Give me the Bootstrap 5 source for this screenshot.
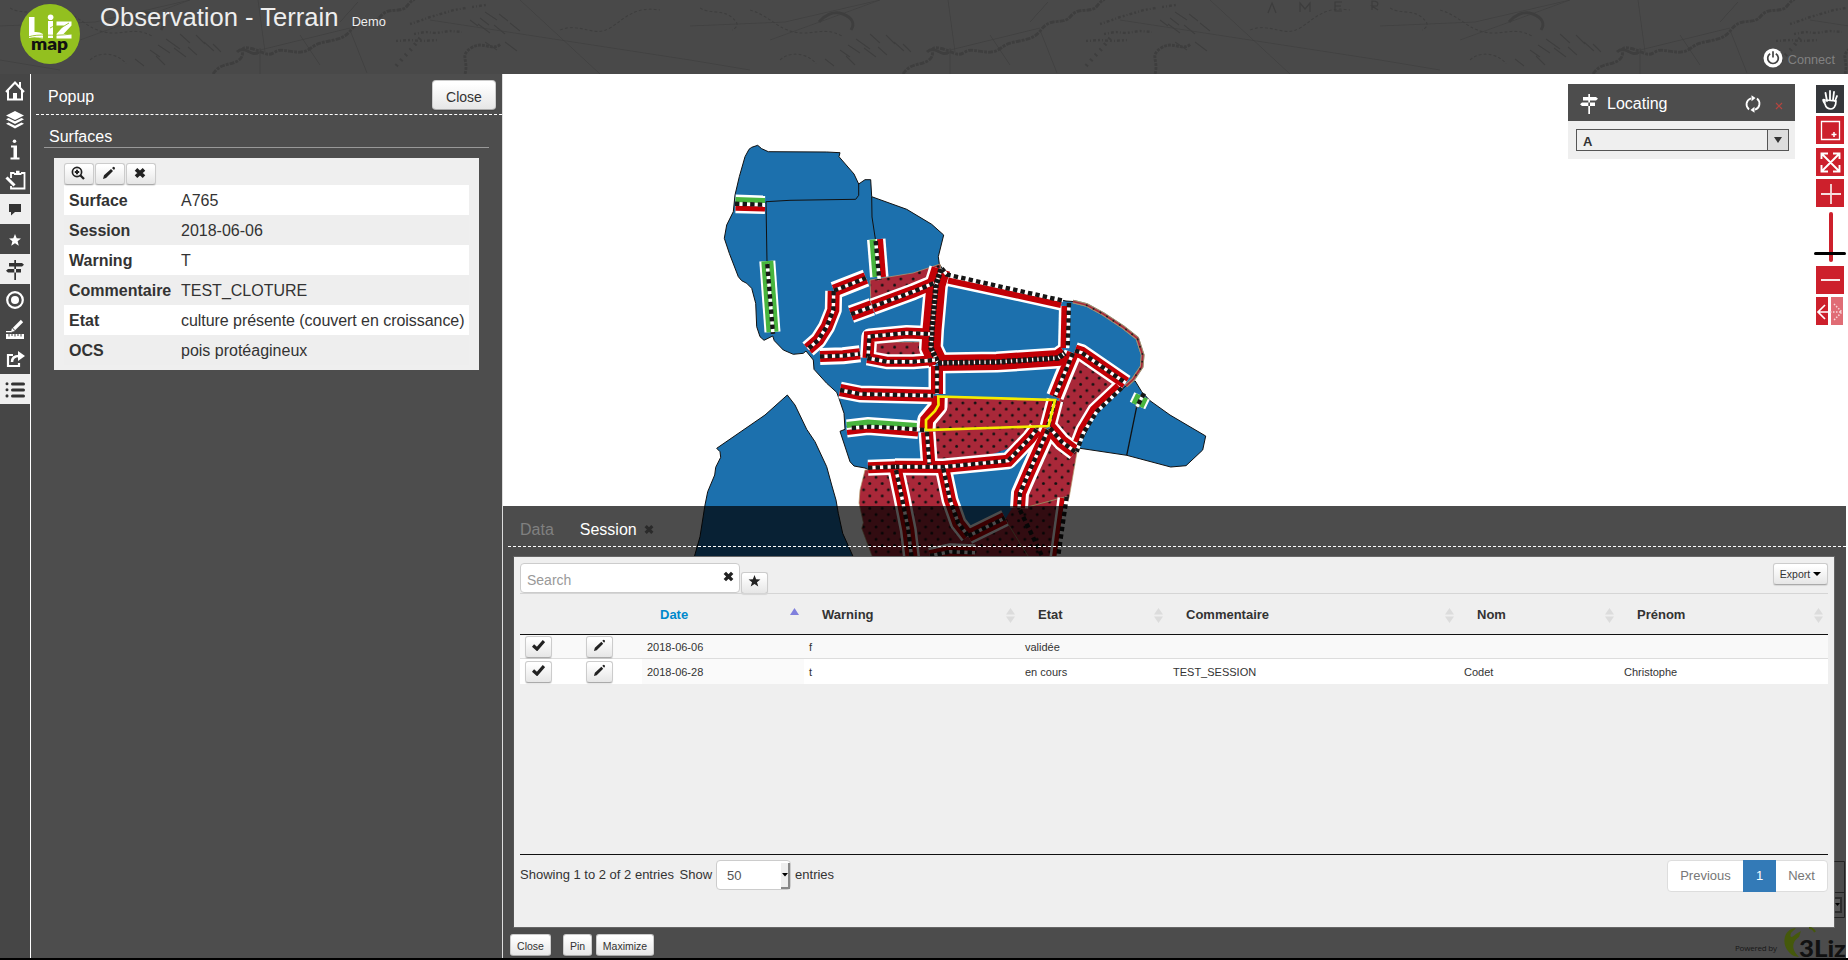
<!DOCTYPE html>
<html lang="en">
<head>
<meta charset="utf-8">
<title>Observation - Terrain</title>
<link href="https://cdn.jsdelivr.net/npm/bootstrap@5.3.0/dist/css/bootstrap.min.css" rel="stylesheet">
<style>
body{font-family:"Liberation Sans",Arial,sans-serif;font-size:14px;line-height:20px;color:#333;background:#000;height:960px;overflow:hidden}
svg{display:block;flex:none}
.top-bar{height:74px;background:#494949;color:#eee}
.top-bar .relief{position:absolute;inset:0}
.brand-mark{margin:4px 0 0 20px}
.app-title{font-size:25.6px;line-height:34px;margin-left:20px}
.app-title span{font-size:12.8px;margin-left:6px}
.connect{font-size:12.7px;color:#818181;margin:0 13px 5px 0;gap:5px}
.work-area{height:884px;background:#4d4d4d}
.side-menu{width:31px;background:#464646;border-right:1px solid #fff;color:#fff}
.side-menu div{height:30px;width:30px;padding-top:1px}
.side-menu .on{background:#efefef;color:#333}
.left-dock{width:472px;border-right:1px solid #ddd;color:#fff;font-size:16px}
.dock-title{height:41px;margin-left:5px;padding:6px 0 0 12px;border-bottom:1px dashed #fff}
.grp{height:33px;margin:0 13px 0 13px;padding:12px 0 0 5px;border-bottom:1px solid #999}
.glossy{background:linear-gradient(#fff,#fff 10%,#e6e6e6);border:1px solid #ccc;border-bottom-color:#aaa;border-radius:3px;color:#333;padding:0;box-shadow:0 1px 1px rgba(0,0,0,.1);font-size:10.5px;line-height:1;display:flex;align-items:center;justify-content:center}
.big-close{width:64px;height:30px;font-size:14px;border-radius:4px;margin:-4px 6px 0 0;padding-top:3px}
.feature{margin:10px 23px 0;background:#efefef;padding:5px 10px;height:212px;color:#333}
.feature .actions{gap:1px}
.feature .glossy{width:30px;height:22px;padding:0 3px 3px 0}
.feature table{width:405px;table-layout:fixed}
.feature td,.feature th{height:30px;padding:2px 0 0 5px;line-height:28px}
.feature th{width:112px}
.feature .long{letter-spacing:-.05px}
.feature tr:nth-child(odd){background:#fff}
.feature tr:nth-child(even){background:#eee}
.map-area{background:#fff;overflow:hidden}
.map-svg{width:1345px;height:884px}
.locate{position:absolute;left:1065px;top:10px;width:227px;height:75px;background:#efefef}
.locate-head{height:37px;background:#4d4d4d;color:#fff;font-size:16px;padding:2px 12px 0 12px}
.combo{height:22px;margin:8px 6px 0 8px;border:1px solid #555;font-weight:700;font-size:13px;padding-left:6px}
.combo i{width:21px;height:20px;background:#ddd;border-left:1px solid #555}
.nav-tools{position:absolute;left:1311px;top:11px;width:32px}
.bottom-dock{position:absolute;left:0;top:432px;width:1343px;height:452px;background:rgba(0,0,0,.7)}
.tab-row{height:41px;margin:0 0 0 5px;border-bottom:1px dashed #fff;padding:7px 0 0 12px;font-size:16px;color:#fff}
.data-panel{margin:9px 0 0 10px;height:372px;width:1322px;background:#efefef;border:1px solid #666;border-left-color:#555;padding:6px}
.searchbox{width:220px;height:30px;background:#fff;border:1px solid #ccc;border-radius:4px;color:#999;padding:6px 5px 0 6px}
.searchbox svg{margin-top:1px}
.grid-table{table-layout:fixed;width:1308px;font-size:11px;border-collapse:separate;border-spacing:0}
.grid-table th{height:42px;font-size:13px;padding:2px 5px 0 18px;border-top:1px solid #d5d5d5;border-bottom:1px solid #111}
.grid-table td{height:24px;padding:0 5px;border-bottom:1px solid #ddd;background:#f9f9f9}
.grid-table tr:last-child td{border:0;background:#fff;height:25px}
.grid-table tr:last-child td.sorted{background:#fafafa}
.grid-table .glossy{width:27px;height:22px;padding-bottom:3px}
.table-rest{height:171px;border-bottom:1px solid #111}
.pager{height:32px;border:1px solid #ddd;border-radius:4px;background:#fff;font-size:13px;color:#777;margin-top:5px}
.pager span{line-height:30px;text-align:center}
.len{width:75px;height:30px;border:1px solid #ccc;border-radius:4px;background:#fff;margin:5px 4px 0 4px;color:#555}
.foot{font-size:13px}
.foot>span{margin-top:10px}
</style>
</head>
<body>
<header class="top-bar position-relative d-flex justify-content-between overflow-hidden">
  <svg class="relief" width="1848" height="74">
    <defs>
      <pattern id="relief" width="690" height="74" patternUnits="userSpaceOnUse">
        <g fill="none" stroke="#3e3e3e" stroke-width="1.2">
          <path d="M0 26L95 22L190 0M80 40L190 0M265 52L258 0M260 50L350 28M0 60L60 70M350 30L367 73M520 0L600 74M430 20L690 60" stroke-width=".7"/>
          <path d="M150 50l10 7m-2-12l12 8m-4-14l14 10m0-15l10 9m6-8l9 9m8 0l8 8m-47-4l12 9m2-10l9 8m7-13l10 9m-58 5l9 9m-30-6l9 7M470 20l8 6m2-8l9 7m-4-13l12 8m2-6l9 7m-30 3l12 9m4-8l11 9m5-11l10 8m-35 11l12 8m8-8l12 9"/>
          <path d="M60 10c20 6 26 18 44 22s30-6 48 4M90 60c10-10 30-6 36 4M10 8c10 6 22 2 30 8s10 10 2 14M560 30c20-8 34 8 50-2s24-22 50-18" stroke-dasharray="3 2"/>
          <path d="M213 74c8-12 18-8 26-14s-2-14 10-12 18 10 26 4 24 6 36-4 30-4 40-18 22-4 30-14 20-2 26-10 6-4 8-8" stroke-width="3" stroke-dasharray="5 1 3 1"/>
          <path d="M237 52c8-8 14 6 22 0m-130-30c5-6 14-12 24-8s12 10 8 16" stroke-width="3"/>
          <path d="M465 74c4-14-6-18 6-26s20 4 30-4" stroke-width="3" stroke-dasharray="3 1"/>
          <path d="M260 48v26M300 35l20 30M340 22l18-20" stroke-width=".8"/>
          <path d="M410 24l12-4 8-3 14-4 10-3 12-2m6-1l14-2m-72 29l12-2 10 1 14-2 12 1m-66 9l14-1 12 1 16-1" stroke-width="2.500" stroke-dasharray="2 2 1 2 3 2"/>
          <path d="M396 66l8-9 9-10 8-10" stroke-width="4" stroke-dasharray="2 5"/>
        </g>
      </pattern>
    </defs>
    <rect width="1848" height="74" fill="url(#relief)"/>
    <path d="M1268 13l4-10 4 10M1300 12V3l5 6 5-6v9M1342 2h-7v9h7m-7-5h6M1372 10V1q8 0 5 5h-5l6 4" fill="none" stroke="#3d3d3d" stroke-width="1.200"/>
  </svg>
  <div class="position-relative d-flex align-items-start">
    <svg class="brand-mark" width="60" height="60" viewBox="0 0 60 60">
      <circle cx="30" cy="30" r="30" fill="#93c01f"/>
      <g fill="#fff"><path d="M9 13h5.500v15q5-.5 8.500 2v5q-7-3-14-1zM28 17h5v17h-5zM36.500 17.500h15v4l-8 8.500h8v4.500h-15v-4.500l7.500-8.500h-7.500z"/><circle cx="30.600" cy="13.300" r="2.800"/></g>
      <path d="M8 33c12-4 22 0 44-3M12 35.500c10-3 15 0 18-1M36 27l13-8M30 24l4-2" stroke="#93c01f" stroke-width=".9" fill="none"/>
      <text x="11" y="46" font-family="Lato,sans-serif" font-weight="800" font-size="17" textLength="37" lengthAdjust="spacingAndGlyphs" fill="#111">map</text>
    </svg>
    <div class="app-title">Observation - Terrain <span>Demo</span></div>
  </div>
  <div class="connect position-relative d-flex align-items-center align-self-end">
    <svg width="20" height="20" viewBox="0 0 20 20"><circle cx="10" cy="10" r="9.500" fill="#fff"/><path d="M7.200 5.700a5.300 5.300 0 1 0 5.600 0M10 3.200v6.300" fill="none" stroke="#444" stroke-width="1.700"/></svg><span class="pt-1" style="line-height:18px">Connect</span>
  </div>
</header>

<main class="work-area d-flex">
  <nav class="side-menu flex-shrink-0">
    <div class="d-flex align-items-center justify-content-center"><svg width="22" height="22" viewBox="0 0 22 22" fill="none" stroke="#fff" stroke-width="2"><path d="M2 13l9-9.500 9 9.500M4 11v9.500h14V11M16 8V3"/><path d="M9 20v-6h4v6z" fill="#fff" stroke="none"/></svg></div>
    <div class="d-flex align-items-center justify-content-center"><svg width="20" height="20" viewBox="0 0 20 20" fill="#fff"><path d="M10 1l9 4.500-9 4.500L1 5.500zM1 9.300l2.500-1.200 6.500 3.200 6.500-3.200L19 9.300l-9 4.700zM1 13.700l2.500-1.200 6.500 3.200 6.500-3.200 2.500 1.200-9 4.700z"/></svg></div>
    <div class="d-flex align-items-center justify-content-center"><svg width="10" height="21" viewBox="0 0 10 21" fill="#fff"><circle cx="4.500" cy="2.300" r="1.800"/><path d="M1 6.500h6v12h2.500v2H.5v-2H3.500v-10H1z"/></svg></div>
    <div class="d-flex align-items-center justify-content-center"><svg width="21" height="20" viewBox="0 0 21 20" fill="none" stroke="#fff" stroke-width="1.800"><path d="M6 8V3h3.500M16 3h3.500v15.500H6V16"/><path d="M9 5V3h2V.8h3.500V3h2v2z" fill="#fff" stroke="none"/><path d="M1.500 7.500l8 8" stroke-width="3"/></svg></div>
    <div class="on d-flex align-items-center justify-content-center"><svg width="14" height="13" viewBox="0 0 14 13" fill="#333"><path d="M1 1h12v8H7l-4 3.500V9H1z"/></svg></div>
    <div class="d-flex align-items-center justify-content-center"><svg width="14" height="14" viewBox="0 0 14 14" fill="#fff"><path d="M7 1l1.700 4.300 4.300.2-3.400 2.800 1.200 4.400L7 10.200l-3.800 2.500 1.200-4.400L1 5.500l4.300-.2z"/></svg></div>
    <div class="on d-flex align-items-center justify-content-center"><svg width="18" height="20" viewBox="0 0 18 20" fill="#333"><path d="M8.300 0h1.700v20H8.300zM3 3h13l2 1.700-2 1.700H3zM15 9H2L0 10.700l2 1.700h13z"/></svg></div>
    <div class="d-flex align-items-center justify-content-center"><svg width="20" height="20" viewBox="0 0 20 20"><circle cx="10" cy="10" r="7.800" fill="none" stroke="#fff" stroke-width="2.200"/><circle cx="10" cy="10" r="4" fill="#fff"/></svg></div>
    <div class="d-flex align-items-center justify-content-center"><svg width="20" height="21" viewBox="0 0 20 21"><path d="M9 10l8-8" stroke="#fff" stroke-width="3.200"/><path d="M6 13l1-4 3 3zM1 12h6v1.200H1zM1 15h18v5H1z" fill="#fff"/><path d="M4 15v2.500m3-2.500v2m3-2v2.500m3-2.500v2m3-2v2.500" stroke="#464646"/></svg></div>
    <div class="d-flex align-items-center justify-content-center"><svg width="19" height="17" viewBox="0 0 19 17" fill="none" stroke="#fff" stroke-width="2.200"><path d="M7 4H2v11h11v-3"/><path d="M6 11c0-5 3-6 7-6" stroke-width="2.500"/><path d="M12 0l7 5-7 5z" fill="#fff" stroke="none"/></svg></div>
    <div class="on d-flex align-items-center justify-content-center"><svg width="20" height="17" viewBox="0 0 20 17" stroke="#333" stroke-width="3" stroke-linecap="round"><path d="M7.500 3H18.500M7.500 9H18.500M7.500 15H18.500M2 2.700v.1M2 8.700v.1M2 14.800v.1"/></svg></div>
  </nav>

  <section class="left-dock flex-shrink-0">
    <div class="dock-title d-flex align-items-center justify-content-between">Popup<button class="glossy big-close">Close</button></div>
    <div class="grp">Surfaces</div>
    <div class="feature">
      <div class="actions d-flex">
        <button class="glossy"><svg width="14" height="14" viewBox="0 0 14 14" fill="none" stroke="#222"><circle cx="6" cy="6" r="4.600" stroke-width="1.700"/><path d="M9.300 9.300L13 13" stroke-width="2.300"/><path d="M6 3.800v4.400M3.800 6h4.400" stroke-width="2"/></svg></button>
        <button class="glossy"><svg width="14" height="14" viewBox="0 0 14 14" fill="#222"><path d="M1 13l1-3.700L9 3l2 2-7 7zM10 2l1.500-1.300q1.500 0 1.500 1.800L12 4z"/></svg></button>
        <button class="glossy"><svg width="12" height="12" viewBox="0 0 12 12" stroke="#222" stroke-width="3.700"><path d="M2 2.300l8 7.400M10 2.300L2 9.700"/></svg></button>
      </div>
      <table>
        <tr><th>Surface</th><td>A765</td></tr>
        <tr><th>Session</th><td>2018-06-06</td></tr>
        <tr><th>Warning</th><td>T</td></tr>
        <tr><th>Commentaire</th><td>TEST_CLOTURE</td></tr>
        <tr><th>Etat</th><td class="long text-nowrap">culture présente (couvert en croissance)</td></tr>
        <tr><th>OCS</th><td>pois protéagineux</td></tr>
      </table>
    </div>
  </section>

  <section class="map-area position-relative flex-grow-1">
    <svg class="map-svg" viewBox="503 74 1345 884">
      <defs>
        <pattern id="dots" width="12.400" height="12.400" patternUnits="userSpaceOnUse" patternTransform="translate(936 401)"><rect width="13" height="13" fill="#a92839"/><circle cx="2" cy="2" r="1.450" fill="#111"/><circle cx="8.200" cy="8.200" r="1.450" fill="#111"/></pattern>
      </defs>
      <g fill="#1c70ad" stroke="#111" stroke-width="1">
        <path d="M735 195L739.300 176.700 745 156.700 749 149.300 751.700 147.300 757.700 145.300 761.700 148.700 768.300 151.700 826.700 152 840 152.700 839 156.700 854 174 858.700 184 865 179.700 870.700 179.700 871.700 196.700 906.700 209.300 931.700 224.300 943.700 235 938.300 256.700 939.300 264 946 274 1066 301 1073 301.500 1086.700 305 1103.300 314 1123.300 327.300 1137.300 338.300 1142.700 355 1141.700 366.700 1133.300 379.300 1126 386 1096 413 1077 452 1010 530 930 500 865 468 854 466 850 461.700 840 431.300 845 429.300 844 413.300 839.300 399.300 836.700 392.300 826.700 383.300 814 369.300 813.300 360 806 351 803.300 353.300 793.300 354.300 783.300 350 774.300 340.700 772.700 336 764 340.300 760 336.700 756.700 326.700 755.700 303.300 751.700 288.300 746.700 283.300 741.700 280.700 738.300 276.700 729.300 253.300 724.300 238.300 726.700 225 733.300 211.700z"/>
        <path fill="none" d="M858.700 184V195.300L855.700 199.300 790 200.300 766 201.700 767 262M871.700 196.700L872 217 875.500 240"/>
        <path d="M716.700 448.300L765 415 787.300 395 795 405 806.700 429.300 815 441.700 826.700 466.700 831.700 485 836 500 838.300 513.300 842.700 533.300 860 572H690L700 536.700 705 505 707.700 491.700 714.700 475 715.700 467.300 720.700 457.300 720 451.700z"/>
        <path d="M1135 380.700L1141.700 391.700 1150 400.700 1170 415 1205.700 436 1202.700 450 1186 465.700 1170.700 467 1126.700 455.300 1078 448 1096 413 1128 384z"/>
        <path d="M1136.700 406.700L1126.700 455.300" stroke-width="1.300"/>
      </g>
      <g fill="none"><path id="rim" d="M1073 301.500L1086.700 305 1103.300 314 1123.300 327.300 1137.300 338.300 1142.700 355 1141.700 366.700 1133.300 379.300 1126 386" stroke="#9d9273" stroke-width="3.600"/>
      <use href="#rim"/>
      <path d="M1073 301.500L1086.700 305 1103.300 314 1123.300 327.300 1137.300 338.300 1142.700 355 1141.700 366.700 1133.300 379.300 1126 386" stroke="#a92839" stroke-width="1.700"/>
      <path d="M1086 305L1103.300 314 1123.300 327.300 1137.300 338.300 1142.700 355 1141.700 366.700 1133.300 379.300" stroke="#222" stroke-width="1.700" stroke-dasharray="1.700 6"/></g>
      <g fill="url(#dots)" stroke="#b4a070" stroke-width=".7">
        <path d="M870 280L913 273 940 264 941 270 925 288 871 304z"/>
        <path d="M870 342H925V358H870z"/>
        <path d="M936 396L1055 400 1048 427 1030 440 1008 460 932 467 928 430z"/>
        <path d="M1076 355L1118 385 1094 413 1077 446 1054 427 1060 395z"/>
        <path d="M865 470L860 490 859 503 863.300 522.700 861.700 528.300 878 572H1056L1063 517 1069.300 496.700 1077 452 1050 428 1034 453 1015 500 1004 519 970 530 958 505 948 468z"/>
      </g>
      <path d="M948 470L1032 440 1040 452 1020 495 1006 518 968 535z" fill="#1c70ad"/>
      <path d="M1020 509L1066 496.700M1005 519L1028 556" stroke="#96855c" fill="none"/>
      <g id="roads" fill="none"></g>
      <path d="M938.300 396.500L1055 400 1048.500 426 926 430 926 420 935 411 938.500 405z" fill="none" stroke="#f4ec00" stroke-width="2.700"/>
    </svg>

    <aside class="locate">
      <div class="locate-head d-flex align-items-center">
        <svg width="18" height="20" viewBox="0 0 18 20" fill="#fff"><path d="M8.300 0h1.700v20H8.300zM3 3h13l2 1.700-2 1.700H3zM15 8.500H2L0 10.200l2 1.700h13z"/></svg>
        <span class="flex-grow-1" style="margin-left:9px">Locating</span>
        <svg width="16" height="18" viewBox="0 0 16 18" fill="none" stroke="#fff" stroke-width="1.800"><path d="M6 3.300C1 5 0 11 4 14.500M10 14.700C15 13 16 7 12 3.500"/><path d="M6.500.3v6L10.500 3zM9.500 17.700v-6L5.500 15z" fill="#fff" stroke="none"/></svg>
        <svg class="mt-1" style="margin-left:14px" width="8" height="8" viewBox="0 0 8 8" stroke="#b5453f" stroke-width="1.200"><path d="M1 1l6 6M7 1L1 7"/></svg>
      </div>
      <div class="combo d-flex align-items-center justify-content-between"><span class="pt-1">A</span><i class="d-flex align-items-center justify-content-center"><svg width="8" height="6"><path d="M0 0h8L4 6z" fill="#333"/></svg></i></div>
    </aside>

    <div class="nav-tools d-flex flex-column align-items-center">
      <svg width="28" height="28" viewBox="0 0 28 28"><rect width="28" height="28" fill="#35373b"/><path d="M9 17L7.500 15M11 16l-1.500-8M14 15V6M17 15l1-8M19 16l2-5" stroke="#fff" stroke-width="1.800" stroke-linecap="round"/><path d="M9 15c-2-1-3 0 0 4 1 4 4 5 6 5s5-2 5-8z" fill="none" stroke="#fff" stroke-width="1.700"/></svg>
      <svg style="margin-top:3px" width="28" height="28" viewBox="0 0 28 28"><rect width="28" height="28" fill="#cd202c"/><path d="M5.500 5.500h18v18h-18z" fill="none" stroke="#fff" stroke-width="1.300"/><path d="M15.500 18.500h5M18 16v5" stroke="#fff" stroke-width="1.500"/></svg>
      <svg style="margin-top:4px" width="28" height="28" viewBox="0 0 28 28"><rect width="28" height="28" fill="#cd202c"/><path d="M6 6l17 17M23 6L6 23M5.500 11V5.500H12M17 5.500h6.500V11M23.500 17v6.500H17M12 23.500H5.500V17" stroke="#fff" stroke-width="1.900" fill="none"/></svg>
      <svg style="margin-top:3px" width="28" height="28" viewBox="0 0 28 28"><rect width="28" height="28" fill="#cd202c"/><path d="M5 15h20M15 5v20" stroke="#f6dede" stroke-width="1.800"/></svg>
      <svg style="margin-top:5px" width="32" height="50" viewBox="0 0 32 50"><path d="M17 2v46" stroke="#cd202c" stroke-width="4" stroke-linecap="round"/><path d="M1.500 41.500h29" stroke="#000" stroke-width="3" stroke-linecap="round"/></svg>
      <svg style="margin-top:4px" width="28" height="28" viewBox="0 0 28 28"><rect width="28" height="28" fill="#cd202c"/><path d="M5 14h19" stroke="#fff" stroke-width="1.800"/></svg>
      <svg style="margin-top:3px" width="28" height="28" viewBox="0 0 28 28"><path d="M0 0h12v28H0z" fill="#cd202c"/><path d="M15 0h12v28H15z" fill="#e06c75"/><path d="M12 15H2M9 8l-7 7 7 7" stroke="#fff" stroke-width="1.700" fill="none"/><path d="M14 15h12M18 7l8 8-8 8" stroke="#f8d5d8" stroke-width="1.500" stroke-dasharray="1.500 1.500" fill="none"/></svg>
    </div>

    <section class="bottom-dock">
      <div class="tab-row d-flex align-items-center"><span style="color:#808080">Data</span><span style="margin-left:26px">Session</span><svg style="margin-left:7px" width="10" height="11" viewBox="0 0 12 12" stroke="#2a2a2a" stroke-width="3.700"><path d="M2 2l8 8M10 2L2 10"/></svg></div>
      <div class="data-panel d-flex flex-column">
        <div class="d-flex align-items-start" style="height:30px">
          <div class="searchbox d-flex justify-content-between">Search<svg width="11" height="11" viewBox="0 0 12 12" stroke="#222" stroke-width="3.700"><path d="M2 2l8 8M10 2L2 10"/></svg></div>
          <button class="glossy" style="width:27px;height:22px;margin:9px 0 0 1px;padding-bottom:4px"><svg width="13" height="12" viewBox="0 0 14 14" fill="#222"><path d="M7 0l1.900 4.900 5 .3-4 3.200 1.500 5L7 10.600l-4.400 2.800 1.500-5-4-3.200 5-.3z"/></svg></button>
          <button class="glossy ms-auto" style="width:55px;height:22px">Export<svg style="margin-left:3px" width="8" height="4"><path d="M0 0h8L4 4z" fill="#000"/></svg></button>
        </div>
        <table class="grid-table">
          <colgroup><col style="width:61px"><col style="width:61px"><col style="width:162px"><col style="width:216px"><col style="width:148px"><col style="width:291px"><col style="width:160px"><col></colgroup>
          <thead><tr id="heads"><th></th><th></th></tr></thead>
          <tbody id="rows"></tbody>
        </table>
        <div class="table-rest"></div>
        <div class="foot d-flex align-items-start">
          <span>Showing 1 to 2 of 2 entries&nbsp;</span><span style="margin-left:2px">Show</span>
          <div class="len d-flex align-items-center justify-content-between"><div style="margin:2px 0 0 10px">50</div><svg width="9" height="28" viewBox="0 0 9 28"><path d="M0 2h7v24H0z" fill="#eee"/><path d="M8 2v25H0" stroke="#888" stroke-width="2" fill="none"/><path d="M1 12h6l-3 3.500z" fill="#000"/></svg></div>
          <span>entries</span>
          <div class="pager ms-auto d-flex"><span style="width:75px">Previous</span><span class="text-white" style="width:33px;background:#337ab7;margin:-1px 0;line-height:32px">1</span><span style="width:51px">Next</span></div>
        </div>
      </div>
      <div class="d-flex" style="margin:6px 0 0 7px">
        <button class="glossy" style="width:41px;height:22px;padding-top:2px">Close</button><button class="glossy" style="width:29px;height:22px;margin-left:12px;padding-top:2px">Pin</button><button class="glossy" style="width:58px;height:22px;margin-left:4px;padding-top:2px">Maximize</button>
      </div>
      <svg style="position:absolute;left:1231px;bottom:0;overflow:visible" width="114" height="97" viewBox="1734 861 114 97">
        <path d="M1834.500 861.500h10v56h-10M1835 892.500h10" fill="none" stroke="#222"/><path d="M1835 898h6v14h-6" fill="#555" stroke="#2c2c2c" stroke-width="2"/><path d="M1835 903h5l-2.500 3z" fill="#000"/>
        <text x="1735" y="951" font-family="Open Sans,sans-serif" font-size="8" textLength="42" fill="#181818">Powered by</text>
        <path d="M1796 928c-14 1-16 20-2 28l5 1c-9-9-6-16 0-20l2-6-5 3c-3 3-7 5-5-1z" fill="#45590b"/><path d="M1809 928q4 0 6 4" stroke="#45590b" stroke-width="2" fill="none"/>
        <text x="1799" y="957" font-family="Lato,sans-serif" font-weight="900" font-size="23" textLength="47" lengthAdjust="spacingAndGlyphs" fill="#111">3Liz</text>
      </svg>
    </section>
  </section>
</main>

<script>
// Roads: dotted centre line, coloured band (offset path when it lies on one side), band width, casing width, colour
const R = '#c20006', G = '#48b53e';
const roads = [
  {d:'941.700 268.300 946.700 274.500 1063 300.700', b:[['948 280.500 1061 305',6,R]]},
  {d:'941 269 936 285 932 330 931 348 938 363', w:19, c:24, fat:1},
  {d:'938 363 996.700 362 1058 358 1065 353', w:16, c:21, fat:1},
  {d:'834 290.700 866 278', w:12, c:18},
  {d:'833.700 291 833.300 310 826.700 326.700 818.300 340 808 349', w:12, c:17},
  {d:'820 356.500 843 355.700 860 353.700', w:11, c:17},
  {d:'851 314.300 872 306.700', w:13, c:18},
  {d:'872.700 306.700 913.300 291.700 934 283', w:12, c:17},
  {d:'868 358 869.300 336.500 906.700 333 930 334', w:11, c:16},
  {d:'867.300 358 886.700 361.700 913.300 361.700 935 360', w:10, c:15},
  {d:'1069 303 1067.700 348', b:[['1064.500 306 1063.500 348',6,R]]},
  {d:'1075 350.500 1081.700 352.700 1125.700 383', w:12, c:17},
  {d:'1121.700 388 1096.700 411.700 1083.300 433 1076.700 451.700', b:[['1118 385.500 1093 409 1081 429 1076 442',6,R]]},
  {d:'1073 353 1063 376.700 1055 396.700', w:12, c:18},
  {d:'1055 400 1048 426.700', w:12, c:17},
  {d:'1048 430 1030 470 1020 493 1019 508', w:12, c:18},
  {d:'1050 428 1061.700 441.700 1075 451.700', w:13, c:18},
  {d:'937 366 937 394', w:12, c:17},
  {d:'938.300 396 938 406.700 926.700 420 926 430', w:13, c:19, n:1},
  {d:'927 432 929.300 464', w:12, c:17},
  {d:'840 390 860 394 933.300 395.700', w:12, c:17},
  {d:'851.700 428 870 426.700 896.700 428 925 430', b:[['846.700 425 868 422.500 916.700 426',6,G],['847 432.500 868 430 918 434',5,R]]},
  {d:'895 466.700 943.300 467 1008.300 460.700 1030 438 1036.700 429.300', w:12, c:17},
  {d:'868 467.800 896 466.700', w:11, c:16},
  {d:'896 470 901.700 496.700 908.300 530 913.300 572', w:12, c:17},
  {d:'943.300 468.300 950 500 958.300 523.300 968.300 536', w:12, c:17},
  {d:'968.300 536 1005 518', w:12, c:17},
  {d:'1066.700 496.700 1063.300 520 1056 572', b:[['1063 498 1060 520 1053 572',6,R]]},
  {d:'930 556 950 551.700 975 552.700', w:12, c:17},
  {d:'1020 510 1042 556'},
  {d:'735 203.700 765 204.700', b:[['735.500 200.500 765 201.500',7,G],['735.500 208.200 765 209',5,R]]},
  {d:'767.300 264 773 334', w:12, c:16, band:'767.300 261 772.500 332', col:G},
  {d:'875.700 241 879.300 280', b:[['872.500 239.500 875.500 277',6,G],['880 239 883 277',6,R]]},
  {d:'1144 393.300 1136.700 407.300', w:13, c:17, band:'1142 396 1137.500 405.500', col:G}
];
const P = (d, w, c, x='') => `<path d="M${d}" stroke="${c}" stroke-width="${w}" ${x}/>`;
let casing = '', bands = '', marks = '';
for (const r of roads) {
  const list = r.b || (r.w ? [[r.band || r.d, r.w, r.col || R]] : []);
  for (const [d, w, c] of list) {
    casing += P(d, r.b ? w + 5 : r.c, '#fff', 'stroke-linejoin="round"');
    bands += P(d, w, c);
  }
  if (!r.n) {
    if (r.w || r.b) marks += P(r.d, 3.4, '#fff');
    marks += P(r.d, r.fat ? 5.5 : 4.4, '#161616', `stroke-dasharray="${r.fat ? '4 1.300' : '4.400 3.200'}"`);
  }
}
document.getElementById('roads').innerHTML = casing + bands + marks;

const both = '<svg width="9" height="15"><path d="M4.500 0L9 6.500H0zM4.500 15L9 8.500H0z" fill="#dcdcdc"/></svg>';
const up = '<svg width="9" height="15"><path d="M4.500 0L9 7H0z" fill="#8080dd"/></svg>';
['Date','Warning','Etat','Commentaire','Nom','Prénom'].forEach((h, i) => {
  document.getElementById('heads').insertAdjacentHTML('beforeend', `<th><div class="d-flex justify-content-between align-items-center" ${i ? '' : 'style="color:#0088cc"'}>${h}${i ? both : up}</div></th>`);
});
const check = '<button class="glossy"><svg width="13" height="12" viewBox="0 0 13 12"><path d="M1 6.500l4 3.500 7-8" fill="none" stroke="#222" stroke-width="3.300"/></svg></button>';
const pencil = '<button class="glossy"><svg width="13" height="13" viewBox="0 0 14 14" fill="#222"><path d="M1 13l1-3.700L9 3l2 2-7 7zM10 2l1.500-1.300q1.500 0 1.500 1.800L12 4z"/></svg></button>';
[['2018-06-06','f','validée','','',''],['2018-06-28','t','en cours','TEST_SESSION','Codet','Christophe']].forEach(r => {
  document.getElementById('rows').insertAdjacentHTML('beforeend', `<tr><td>${check}</td><td>${pencil}</td>${r.map((v, i) => `<td${i ? '' : ' class="sorted"'}>${v}</td>`).join('')}</tr>`);
});
</script>
<script src="https://cdn.jsdelivr.net/npm/bootstrap@5.3.0/dist/js/bootstrap.bundle.min.js"></script>
</body>
</html>
